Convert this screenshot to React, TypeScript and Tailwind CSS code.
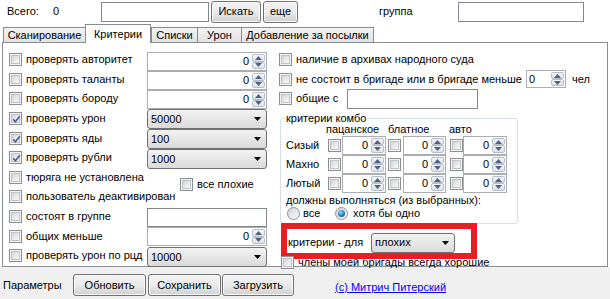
import React from "react";

// Win7-style WinForms controls, drawn with plain Tailwind
function Check({ checked = false }: { checked?: boolean }) {
  return (
    <span className="relative flex h-[13px] w-[13px] shrink-0 items-center justify-center border border-[#8e8f8f] bg-[#f4f4f4]">
      <span className="h-[9px] w-[9px] border border-[#bfc2c7] bg-linear-to-br from-[#d3d5d9] to-[#fafafa]" />
      {checked && (
        <svg className="absolute left-px top-px" width="11" height="11" viewBox="0 0 11 11">
          <path d="M2.2 5.4 L4.4 7.8 L8.8 2.2" fill="none" stroke="#4a5f97" strokeWidth="1.7" />
        </svg>
      )}
    </span>
  );
}

function Radio({ on = false }: { on?: boolean }) {
  return (
    <span className="flex h-[13px] w-[13px] shrink-0 items-center justify-center rounded-full border border-[#8e8f8f] bg-linear-to-br from-[#d2d4d8] to-[#fbfbfb]">
      {on && <span className="h-[7px] w-[7px] rounded-full bg-[radial-gradient(circle_at_40%_35%,#9adcfb,#1b72b8_60%,#0c3668)]" />}
    </span>
  );
}

function Arrow({ up = false }: { up?: boolean }) {
  return (
    <svg width="7" height="4" viewBox="0 0 7 4">
      <path d={up ? "M0 4 L3.5 0 L7 4 Z" : "M0 0 L7 0 L3.5 4 Z"} fill="#4d6185" />
    </svg>
  );
}

function SpinBtn({ up = false }: { up?: boolean }) {
  return (
    <span className="flex flex-1 items-center justify-center rounded-[2px] border border-[#b9bdc8] bg-linear-to-b from-[#f5f7fa] to-[#dde2ea]">
      <Arrow up={up} />
    </span>
  );
}

function Spin({ className = "", left = false }: { className?: string; left?: boolean }) {
  return (
    <div className={`flex shrink-0 border border-[#abadb3] bg-white ${className}`}>
      <span className={`flex-1 self-center ${left ? "pl-[2px] text-left" : "pr-[3px] text-right"}`}>0</span>
      <span className="flex w-[14px] flex-col py-px pr-px">
        <SpinBtn up />
        <SpinBtn />
      </span>
    </div>
  );
}

function Combo({ value, className = "" }: { value: string; className?: string }) {
  return (
    <div className={`flex h-[20px] shrink-0 items-center justify-between rounded-[3px] border border-[#707070] bg-linear-to-b from-[#f3f3f3] to-[#dadada] pl-[3px] pr-[5px] ${className}`}>
      <span>{value}</span>
      <svg width="7" height="4" viewBox="0 0 7 4">
        <path d="M0 0 L7 0 L3.5 4 Z" fill="#000" />
      </svg>
    </div>
  );
}

function Button({ children, className = "" }: { children: React.ReactNode; className?: string }) {
  return (
    <div className={`flex h-[22px] items-center justify-center rounded-[3px] border border-[#707070] bg-linear-to-b from-[#f2f2f2] via-[#ebebeb] to-[#d0d0d0] shadow-[inset_0_0_0_1px_#fbfbfb] ${className}`}>
      {children}
    </div>
  );
}

function Tab({ children, className = "" }: { children: React.ReactNode; className?: string }) {
  return (
    <div className={`flex h-[15px] items-center justify-center border-t border-l border-[#898c95] bg-linear-to-b from-[#f3f3f3] to-[#e2e2e2] ${className}`}>
      {children}
    </div>
  );
}

function Row({ checked = false, children }: { checked?: boolean; children: React.ReactNode }) {
  return (
    <div className="flex h-[19.6px] shrink-0 items-center">
      <Check checked={checked} />
      <span className="ml-[4px]">{children}</span>
    </div>
  );
}

const leftLabels: { text: string; checked?: boolean }[] = [
  { text: "проверять авторитет" },
  { text: "проверять таланты" },
  { text: "проверять бороду" },
  { text: "проверять урон", checked: true },
  { text: "проверять яды", checked: true },
  { text: "проверять рубли", checked: true },
  { text: "тюряга не установлена" },
  { text: "пользователь деактивирован" },
  { text: "состоят в группе" },
  { text: "общих меньше" },
  { text: "проверять урон по рцд" },
];

const comboRows = ["Сизый", "Махно", "Лютый"];

export default function App() {
  return (
    <div className="h-[299px] w-[610px] overflow-hidden whitespace-nowrap bg-white font-['Liberation_Sans',Arial,sans-serif] text-[11px] leading-[13px] text-black">
      {/* top search row */}
      <div className="flex h-[23px] items-center">
        <span className="w-[53px] pl-[7px]">Всего:</span>
        <span className="w-[48px]">0</span>
        <div className="h-[20px] w-[108px] border border-[#828790] bg-white" />
        <Button className="ml-[2px] w-[50px]">Искать</Button>
        <Button className="ml-[2px] w-[35px]">еще</Button>
        <span className="ml-[81px] w-[79px]">группа</span>
        <div className="h-[20px] w-[126px] border border-[#828790] bg-white" />
      </div>

      {/* tabs */}
      <div className="flex h-[19px] items-end pl-[3px]">
        <Tab className="w-[82px]">Сканирование</Tab>
        <div className="relative z-10 -mb-px flex h-[19px] w-[66px] items-start justify-center border border-b-0 border-[#898c95] bg-white pt-[3px]">
          Критерии
        </div>
        <Tab className="w-[46px]">Списки</Tab>
        <Tab className="w-[44px]">Урон</Tab>
        <Tab className="w-[133px] border-r">Добавление за посылки</Tab>
      </div>

      {/* tab page */}
      <div className="mx-[2px] flex h-[225px] border border-[#898c95] bg-white pl-[6px]">
        <div className="flex w-[138px] flex-col pt-[7px]">
          {leftLabels.map((l) => (
            <Row key={l.text} checked={l.checked}>
              {l.text}
            </Row>
          ))}
        </div>

        <div className="flex w-[120px] flex-col pt-[9px]">
          <Spin className="h-[19px]" />
          <Spin className="h-[19px]" />
          <Spin className="h-[19px]" />
          <Combo value="50000" />
          <Combo value="100" />
          <Combo value="1000" />
          <div className="ml-[33px] mt-[9px] flex h-[13px] shrink-0 items-center">
            <Check />
            <span className="ml-[4px]">все плохие</span>
          </div>
          <div className="mt-[17px] h-[19px] shrink-0 border border-[#828790] bg-white" />
          <Spin className="h-[19px]" />
          <Combo value="10000" className="mt-px" />
        </div>

        <div className="ml-[12px] flex flex-1 flex-col pt-[7px]">
          <Row>наличие в архивах народного суда</Row>
          <div className="flex h-[19.6px] shrink-0 items-center">
            <Check />
            <span className="ml-[4px] w-[230px]">не состоит в бригаде или в бригаде меньше</span>
            <Spin left className="h-[18px] w-[40px]" />
            <span className="ml-[6px]">чел</span>
          </div>
          <div className="flex h-[19.6px] shrink-0 items-center">
            <Check />
            <span className="ml-[4px] w-[51px]">общие с</span>
            <div className="h-[20px] w-[131px] border border-[#828790] bg-white" />
          </div>

          {/* group box */}
          <div className="relative ml-px mt-[9px] flex h-[106px] w-[238px] shrink-0 flex-col rounded-[3px] border border-[#d5dfe5] pt-[4px]">
            <span className="absolute -top-[7px] left-[4px] bg-white px-px">критерии комбо</span>
            <div className="flex h-[13px] shrink-0 items-center pl-[45px]">
              <span className="w-[62px]">пацанское</span>
              <span className="w-[61px]">блатное</span>
              <span>авто</span>
            </div>
            {comboRows.map((r) => (
              <div key={r} className="flex h-[19px] shrink-0 items-center pl-[5px]">
                <span className="w-[42px]">{r}</span>
                <Check />
                <Spin className="ml-px h-[19px] w-[44px]" />
                <span className="ml-[2px]"><Check /></span>
                <Spin className="ml-[2px] h-[19px] w-[43px]" />
                <span className="ml-[4px]"><Check /></span>
                <Spin className="h-[19px] w-[44px]" />
              </div>
            ))}
            <div className="mt-px flex h-[13px] shrink-0 items-center pl-[5px]">должны выполняться (из выбранных):</div>
            <div className="flex h-[14px] shrink-0 items-center pl-[6px]">
              <Radio />
              <span className="ml-[3px] w-[32px]">все</span>
              <Radio on />
              <span className="ml-[5px]">хотя бы одно</span>
            </div>
          </div>

          <div className="relative mt-[9px] flex h-[20px] shrink-0 items-center">
            <span className="ml-[9px] w-[83px]">критерии - для</span>
            <Combo value="плохих" className="w-[84px]" />
            <div className="absolute -top-[10px] left-[2px] h-[36px] w-[196px] border-[6px] border-[#ed1c24]" />
          </div>
          <div className="mt-[2px] flex h-[16px] shrink-0 items-center pl-[2px]">
            <Check />
            <span className="ml-[4px]">члены моей бригады всегда хорошие</span>
          </div>
        </div>
      </div>

      {/* bottom bar */}
      <div className="flex h-[32px] items-start bg-[#f0f0f0] pt-[7px]">
        <span className="flex h-[22px] w-[73px] items-center pl-[3px]">Параметры</span>
        <Button className="w-[73px]">Обновить</Button>
        <Button className="ml-[2px] w-[73px]">Сохранить</Button>
        <Button className="ml-px w-[72px]">Загрузить</Button>
        <span className="ml-[41px] mt-[2px] flex h-[22px] items-center text-[#0000ff] underline">(c) Митрич Питерский</span>
      </div>
    </div>
  );
}
